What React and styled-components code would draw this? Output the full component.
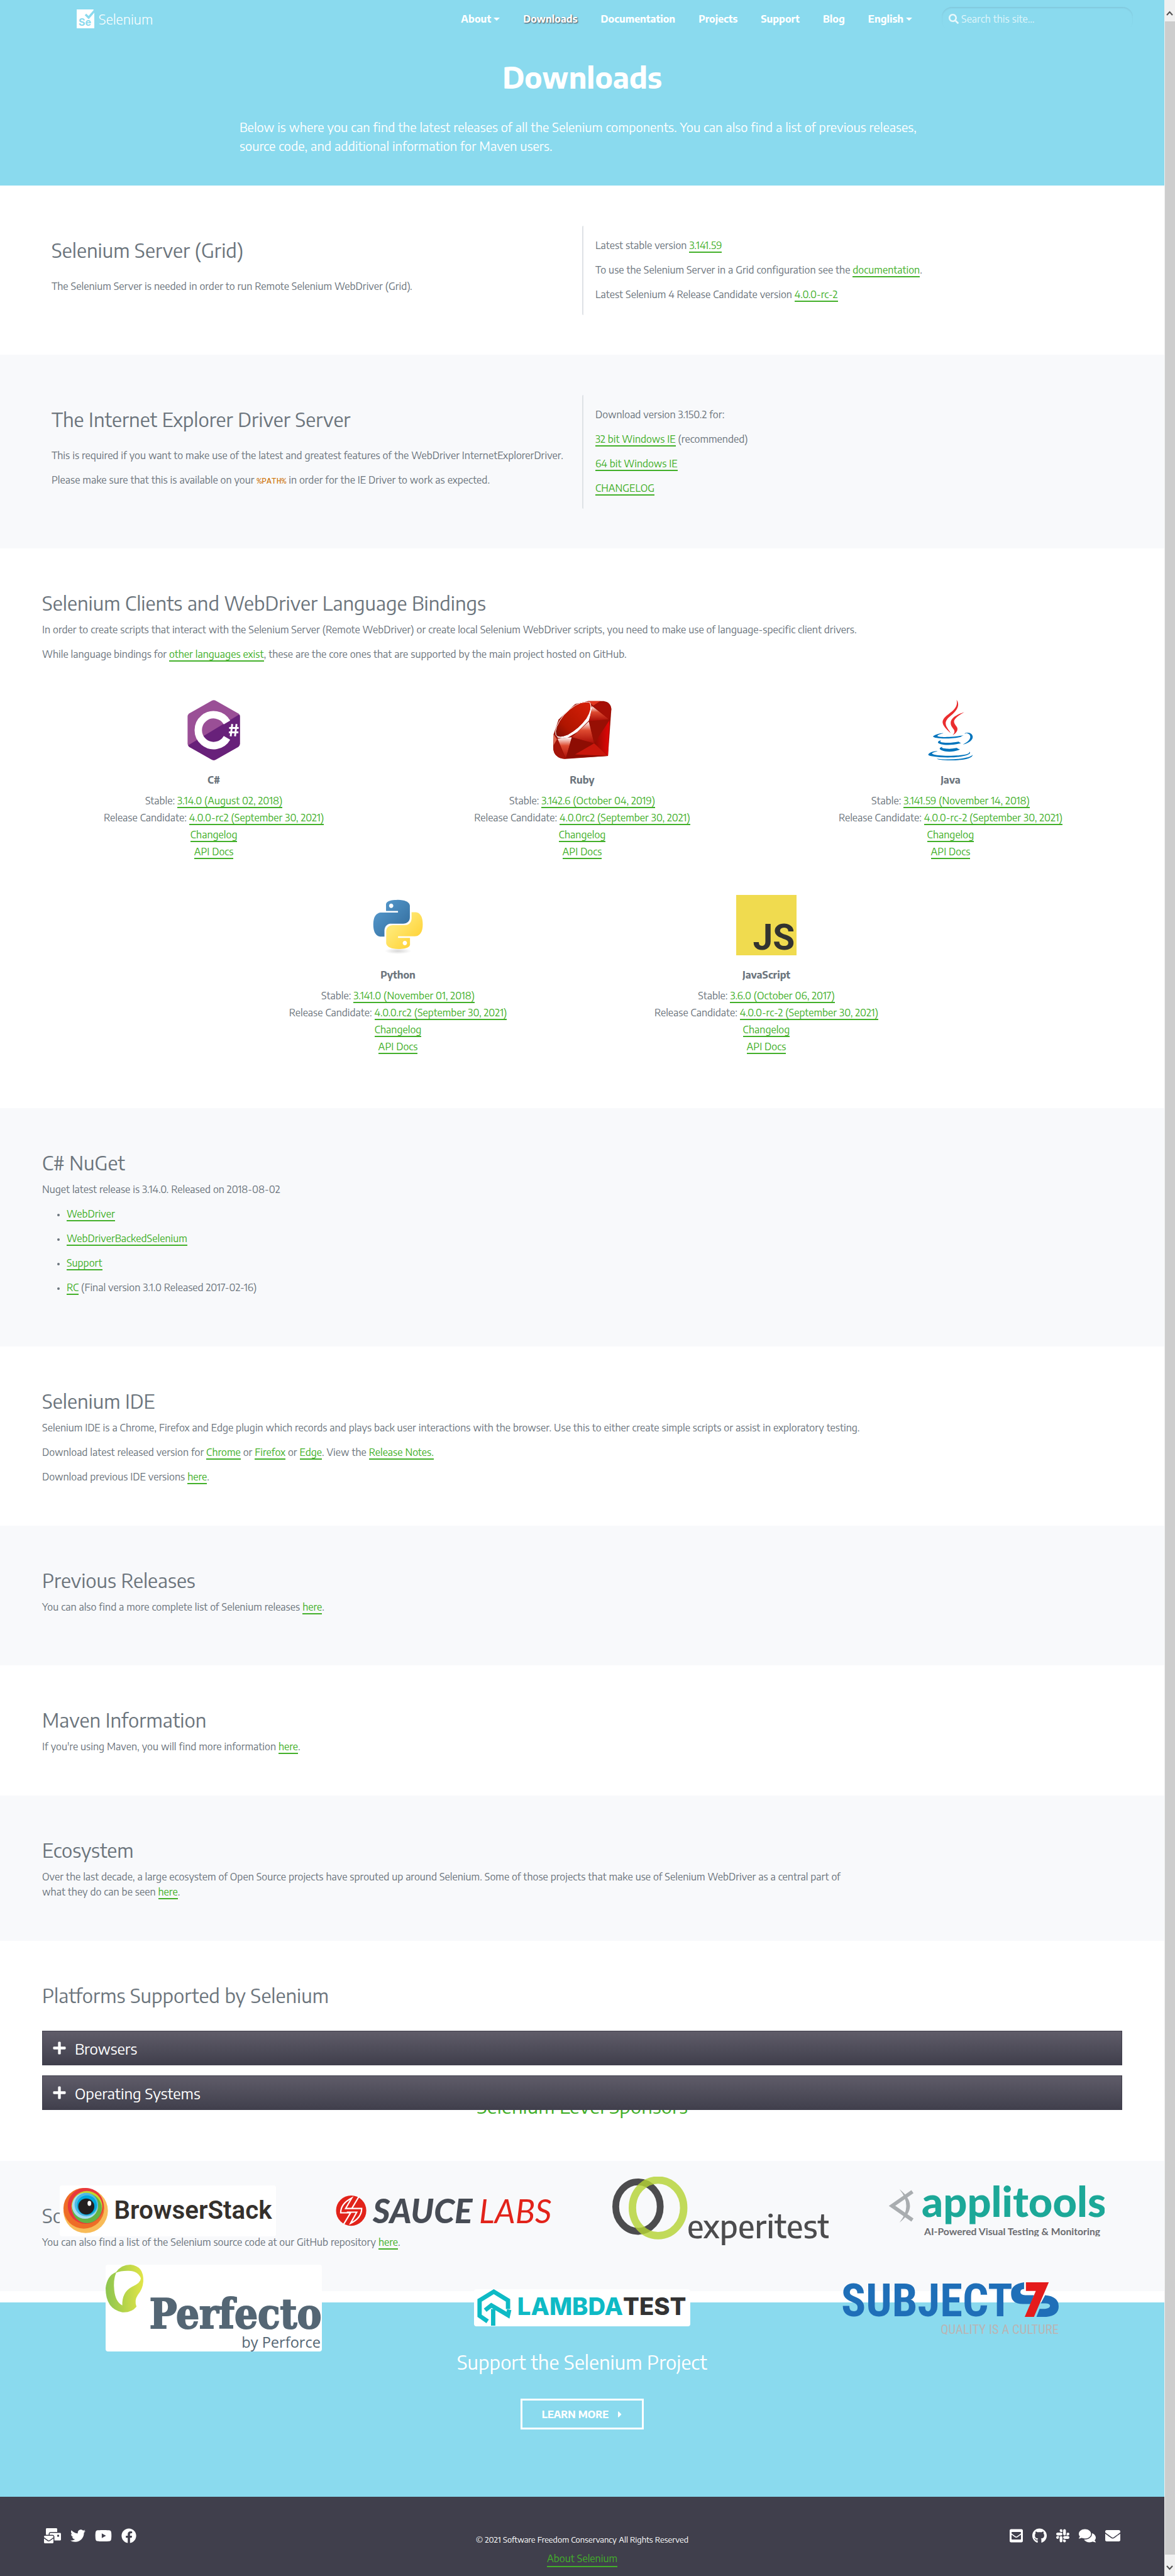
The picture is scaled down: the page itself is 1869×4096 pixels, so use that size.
import React from 'react';
import styled, { createGlobalStyle, css } from 'styled-components';
import {
  FaMailBulk, FaTwitter, FaYoutube, FaFacebook, FaEnvelopeSquare,
  FaGithub, FaSlack, FaComments, FaEnvelope, FaSearch, FaPlus, FaCaretRight,
} from 'react-icons/fa';

const color = {
  sky: '#8adaee',
  green: '#43b02a',
  text: '#6c757d',
  pale: '#f8f9fb',
  dark: '#403f4c',
};

const GlobalStyle = createGlobalStyle`
  *, *::before, *::after { box-sizing: border-box; }
  body {
    margin: 0;
    background: #fff;
    color: ${color.text};
    font-family: 'Encode Sans', Lato, 'Open Sans', sans-serif;
    font-size: 16px;
    line-height: 24px;
  }
  h1, h2, h3, p, ul { margin: 0; }
  button, input { font: inherit; }
`;

const Page = styled.div`
  display: flex;
  align-items: stretch;
`;

const Content = styled.div`
  flex: 1;
  min-width: 0;
`;

/* ---------- scroll rail ---------- */

const Rail = styled.div`
  display: flex;
  flex-direction: column;
  width: 17px;
  background: #f0f0f0;
`;

const RailArrow = styled.div`
  display: flex;
  align-items: center;
  justify-content: center;
  height: 34px;
  padding-top: 8px;
  svg { width: 11px; height: 8px; }
`;

const RailThumb = styled.div`
  flex: 1;
  background: #cdcdcd;
  margin-left: 1px;
`;

/* ---------- header ---------- */

const Hero = styled.header`
  background: ${color.sky};
  color: #fff;
  padding-bottom: 48px;
`;

const Navbar = styled.nav`
  display: flex;
  align-items: center;
  height: 60px;
  padding: 0 50px 0 122px;
`;

const Brand = styled.a`
  display: flex;
  align-items: center;
  gap: 7px;
  margin-right: auto;
  color: #fff;
  font-size: 22px;
  font-weight: 300;
  text-decoration: none;
  svg { width: 28px; height: 30px; }
`;

const NavList = styled.ul`
  display: flex;
  gap: 37px;
  margin-right: 47px;
  padding: 0;
  list-style: none;
`;

const NavLink = styled.a`
  display: flex;
  align-items: center;
  gap: 4px;
  color: #fff;
  font-weight: 700;
  text-decoration: none;
  text-shadow: ${(p) => (p.$active ? '1px 1px 2px #403f4c' : 'none')};
`;

const Caret = styled.span`
  border: 5px solid transparent;
  border-top-color: #fff;
  border-bottom: 0;
`;

const SearchBox = styled.label`
  display: flex;
  align-items: center;
  gap: 4px;
  width: 304px;
  height: 38px;
  padding: 0 11px;
  border-radius: 16px;
  color: rgba(255, 255, 255, 0.8);
  box-shadow: inset 0 2px 2px rgba(64, 63, 76, 0.1);
  svg { width: 16px; height: 16px; }
`;

const SearchInput = styled.input`
  flex: 1;
  min-width: 0;
  padding: 0;
  border: 0;
  outline: 0;
  background: transparent;
  color: #fff;
  &::placeholder { color: rgba(255, 255, 255, 0.75); opacity: 1; }
`;

const Title = styled.h1`
  margin-top: 34px;
  font-size: 47px;
  line-height: 56px;
  font-weight: 700;
  text-align: center;
`;

const Lead = styled.p`
  max-width: 1090px;
  margin: 37px auto 0;
  font-size: 20px;
  line-height: 30px;
`;

/* ---------- sections ---------- */

const Section = styled.section`
  padding: 68px 67px ${(p) => (p.$roomy ? 66 : 51)}px;
  background: ${(p) => (p.$pale ? color.pale : '#fff')};
`;

const SplitSection = styled(Section)`
  display: grid;
  grid-template-columns: 1fr 1fr;
  padding: 64px 67px 63px;
`;

const SplitMain = styled.div`
  padding: 20px 15px 0;
`;

const SplitSide = styled.div`
  padding: 19px 15px 6px 19px;
  border-left: 2px solid #dee2e6;
  border-radius: 2px;
`;

const Heading = styled.h2`
  margin-bottom: ${(p) => (p.$gap || 11)}px;
  font-size: 31px;
  line-height: 38px;
  font-weight: 400;
`;

const Text = styled.p`
  margin-bottom: 15px;
  max-width: ${(p) => (p.$narrow ? '1280px' : 'none')};
`;

const Link = styled.a`
  color: ${color.green};
  text-decoration: none;
  border-bottom: 2px solid ${color.green};
`;

const Code = styled.code`
  font-family: 'Liberation Mono', monospace;
  font-size: 13px;
  color: #cc7000;
`;

const Bullets = styled.ul`
  padding: 0 0 16px 39px;
  li { margin-bottom: 15px; }
  li::marker { font-size: 13px; }
`;

const Languages = styled.div`
  display: flex;
  flex-wrap: wrap;
  justify-content: center;
  margin: 0 -20px 24px;
`;

const Language = styled.article`
  display: flex;
  flex-direction: column;
  align-items: center;
  width: 33.33%;
  padding: 46px 0 9px;
  line-height: 27px;
  svg { height: 96px; width: 96px; }
`;

const LanguageName = styled.h3`
  margin: 19px 0 8px;
  font-size: 16px;
  line-height: 24px;
  font-weight: 700;
`;

/* ---------- accordion ---------- */

const Accordion = styled.div`
  position: relative;
  z-index: 2;
  display: flex;
  flex-direction: column;
  gap: 16px;
  margin-bottom: 30px;
`;

const AccordionButton = styled.button`
  display: flex;
  align-items: center;
  gap: 13px;
  height: 55px;
  padding: 0 15px;
  border: 1px solid ${color.dark};
  background: linear-gradient(#5f5c69, ${color.dark});
  color: #fff;
  font-size: 24px;
  text-align: left;
  svg { width: 23px; height: 23px; }
`;

/* ---------- sponsors ---------- */

const SourceArea = styled.div`
  position: relative;
  margin-bottom: 18px;
`;

const SponsorLayer = styled.div`
  position: absolute;
  z-index: 1;
  top: -106px;
  left: 47px;
  right: 47px;
`;

const SponsorHeading = styled.h2`
  margin-bottom: 93px;
  color: ${color.green};
  font-size: 31px;
  line-height: 38px;
  font-weight: 400;
  text-align: center;
`;

const SponsorRow = styled.div`
  display: flex;
  align-items: center;
  justify-content: space-around;
  margin-bottom: 31px;
`;

const SponsorLink = styled.a`
  display: block;
  width: 344px;
  svg { display: block; width: 100%; height: auto; }
  ${(p) => p.$plate && css`
    background: #fff;
    border-radius: 4px;
  `}
`;

/* ---------- call to action, footer ---------- */

const Support = styled.section`
  display: flex;
  flex-direction: column;
  align-items: center;
  padding: 76px 0 107px;
  background: ${color.sky};
  color: #fff;
`;

const SupportLink = styled.a`
  display: flex;
  align-items: center;
  gap: 14px;
  height: 49px;
  padding: 0 31px;
  border: 3px solid #fff;
  color: #fff;
  font-size: 16px;
  font-weight: 700;
  text-decoration: none;
  text-transform: uppercase;
  svg { width: 8px; height: 16px; }
`;

const Footer = styled.footer`
  display: grid;
  grid-template-columns: 1fr auto 1fr;
  padding: 50px 70px 14px;
  background: ${color.dark};
  color: #fff;
`;

const Icons = styled.div`
  display: flex;
  gap: 15px;
  justify-content: ${(p) => (p.$end ? 'flex-end' : 'flex-start')};
`;

const IconLink = styled.a`
  height: 24px;
  color: #fff;
  svg { display: block; width: ${(p) => p.$width}px; height: 24px; }
`;

const Legal = styled.div`
  display: flex;
  flex-direction: column;
  align-items: center;
  gap: 8px;
  padding-top: 8px;
`;

const Copyright = styled.small`
  font-size: 13px;
  line-height: 20px;
`;

/* ---------- drawings ---------- */

const BrandMark = () => (
  <svg viewBox="0 0 28 30" aria-hidden="true">
    <path d="M0 0H28V30H0Z" fill="#fff" />
    <path d="M28.500 -1V2L19 13L14 8" fill="none" stroke={color.sky} strokeWidth="3.500" />
    <text x="3" y="26" fontFamily="Inter, sans-serif" fontWeight="700" fontSize="16" fill={color.sky}>Se</text>
  </svg>
);

const Chevron = ({ down }) => (
  <svg viewBox="0 0 11 8" aria-hidden="true">
    <path d={down ? 'M1 1L5.500 6L10 1' : 'M1 7L5.500 2L10 7'} fill="none" stroke="#505050" strokeWidth="2" />
  </svg>
);

const CSharpLogo = () => (
  <svg viewBox="0 0 98 98" aria-hidden="true">
    <path d="M46 1Q49 -.5 52 1L89 22Q91.500 24 91.500 27V71Q91.500 74 89 76L52 97Q49 98.500 46 97L9 76Q6.500 74 6.500 71V27Q6.500 24 9 22Z" fill="#9a4f96" />
    <path d="M90.500 23.500Q91.500 25 91.500 27V71Q91.500 74 89 76L52 97Q49 98.500 46 97L9 76Q8 75 7.500 73.500Z" fill="#68217a" />
    <path d="M70.500 36.500A25 25 0 1 0 70.500 61.500" fill="none" stroke="#fff" strokeWidth="12" />
    <path d="M79 39L76.500 59M86 39L83.500 59M74 45.500H89.500M73.500 52.500H89" stroke="#fff" strokeWidth="3" fill="none" />
  </svg>
);

const RubyLogo = () => (
  <svg viewBox="28 25 292 292" aria-hidden="true">
    <defs>
      <linearGradient id="rubyTable" x1="0" y1="1" x2="1" y2="0">
        <stop offset="0" stopColor="#7a0c02" /><stop offset=".3" stopColor="#b01500" /><stop offset="1" stopColor="#d92008" />
      </linearGradient>
      <linearGradient id="rubyShine" x1="0" y1="0" x2="0" y2="1">
        <stop offset="0" stopColor="#fff" /><stop offset=".4" stopColor="#dd4a30" /><stop offset="1" stopColor="#a90c06" />
      </linearGradient>
      <linearGradient id="rubyEdge" x1="0" y1="0" x2="1" y2="0">
        <stop offset="0" stopColor="#8c0c03" /><stop offset="1" stopColor="#e40606" />
      </linearGradient>
    </defs>
    <path d="M202 30H278Q315 36 315 72L299 296L93 310Q34 306 34 252L36 190L60 120L140 45Z" fill="#9c1004" />
    <path d="M46 185L55 207Q75 212 105 207L150 180L206 125L222 70L213 38L165 110L90 180Z" fill="#fff" />
    <path d="M124 205L206 130L232 235Z" fill="url(#rubyShine)" />
    <path d="M55 212L124 205L95 308Z" fill="url(#rubyShine)" />
    <path d="M222 55L303 118L208 127Z" fill="url(#rubyShine)" />
    <path d="M232 235L306 122L299 294Z" fill="url(#rubyEdge)" />
    <path d="M208 127L306 122L232 235Z" fill="#970f04" />
    <path d="M95 308L124 205L232 235L299 296Z" fill="#8e0d03" />
    <path d="M232 235L299 296L140 288Z" fill="#c9170c" />
    <path d="M202 30H262L228 52Z" fill="#e0351f" />
    <path d="M228 52L262 32Q315 36 315 72L303 118Z" fill="#a50f06" />
    <path d="M36 190L52 215L36 245Z" fill="#e0654e" />
    <path d="M36 245L53 215L93 310Q34 306 34 252Z" fill="#a41409" />
    <path d="M212 38Q226 66 196 115Q160 165 105 195Q60 214 47 195Q36 160 85 98Q145 35 190 35Q206 34 212 38Z" fill="url(#rubyTable)" stroke="#fff" strokeWidth="3" />
  </svg>
);

const JavaLogo = () => (
  <svg viewBox="0 0 384 512" aria-hidden="true">
    <g fill="#0074bd">
      <path d="M277.740 312.900c9.800-6.700 23.400-12.500 23.400-12.500s-38.700 7-77.200 10.200c-47.100 3.900-97.700 4.700-123.100 1.300-60.100-8 33-30.100 33-30.100s-36.100-2.400-80.600 19c-52.500 25.400 130 37 224.500 12.100z" />
      <path d="M300.840 375.100a12.190 12.190 0 0 1-2 2.600c128.300-33.700 81.100-118.900 19.800-97.300a17.330 17.330 0 0 0-8.200 6.300 70.450 70.450 0 0 1 11-3c31-6.500 75.500 41.500-20.600 91.400zM348 437.400s14.500 11.900-15.900 21.200c-57.900 17.500-240.800 22.800-291.600.7-18.300-7.900 16-19 26.800-21.300 11.200-2.400 17.700-2 17.700-2-20.300-14.300-131.300 28.100-56.400 40.200C232.840 509.400 401 461.300 348 437.400zM124.440 396c-78.700 22 47.900 67.400 148.100 24.500a185.890 185.890 0 0 1-28.200-13.800c-44.700 8.500-65.400 9.100-106 4.500-33.500-3.800-13.900-15.200-13.900-15.200zm179.800 97.200c-78.700 14.800-175.800 13.100-233.300 3.600 0-.1 11.800 9.700 72.400 13.600 92.200 5.900 233.800-3.300 237.100-46.900 0 0-6.400 16.500-76.200 29.700zM260.640 353c-59.200 11.400-93.500 11.100-136.800 6.600-33.500-3.500-11.600-19.700-11.600-19.700-86.800 28.800 48.200 61.400 169.500 25.900a60.370 60.370 0 0 1-21.100-12.800z" />
    </g>
    <g fill="#ea2d2e">
      <path d="M192.340 280.800c-19-42.700-83.100-80.200 0-145.800C296 53.200 242.840 0 242.840 0c21.500 84.500-75.600 110.100-110.700 162.600-23.900 35.900 11.700 74.400 60.200 118.200z" />
      <path d="M306.940 104.600c.1 0-175.200 43.800-91.500 140.200 24.700 28.400-6.500 54-6.500 54s62.700-32.400 33.900-72.900c-26.900-37.800-47.500-56.600 64.100-121.300z" />
    </g>
  </svg>
);

const PythonLogo = () => (
  <svg viewBox="-2.750 -2.400 29.500 29.500" aria-hidden="true">
    <defs>
      <linearGradient id="pyBlue" x1="0" y1="0" x2="1" y2="1">
        <stop offset="0" stopColor="#5a9fd4" /><stop offset="1" stopColor="#306998" />
      </linearGradient>
      <linearGradient id="pyYellow" x1="0" y1="0" x2="1" y2="1">
        <stop offset=".3" stopColor="#ffe873" /><stop offset=".8" stopColor="#ffd43b" />
      </linearGradient>
      <radialGradient id="pyShade">
        <stop offset="0" stopColor="#bbb" stopOpacity=".6" /><stop offset="1" stopColor="#bbb" stopOpacity="0" />
      </radialGradient>
    </defs>
    <ellipse cx="12" cy="25" rx="6.500" ry="1.500" fill="url(#pyShade)" />
    <path fill="url(#pyBlue)" d="M14.250.18l.9.2.73.26.59.3.45.32.34.34.25.34.16.33.1.3.04.26.02.2-.01.13V8.500l-.05.63-.13.55-.21.46-.26.38-.3.31-.33.25-.35.19-.35.14-.33.1-.3.07-.26.04-.21.02H8.770l-.69.05-.59.14-.5.22-.41.27-.33.32-.27.35-.2.36-.15.37-.1.35-.07.32-.04.27-.02.21v3.060H3.170l-.21-.03-.28-.07-.32-.12-.35-.18-.36-.26-.36-.36-.35-.46-.32-.59-.28-.73-.21-.88-.14-1.050-.05-1.230.06-1.220.16-1.040.24-.87.32-.71.36-.57.4-.44.42-.33.42-.24.4-.16.36-.1.32-.05.24-.01h.16l.06.01h8.160v-.83H6.180l-.01-2.750-.02-.37.05-.34.11-.31.17-.28.25-.26.31-.23.38-.2.44-.18.51-.15.58-.12.64-.1.71-.06.77-.04.84-.02 1.270.05zm-6.300 1.980l-.23.33-.08.41.08.41.23.34.33.22.41.09.41-.09.33-.22.23-.34.08-.41-.08-.41-.23-.33-.33-.22-.41-.09-.41.09z" />
    <path fill="url(#pyYellow)" d="M21.100 6.110l.28.06.32.12.35.18.36.27.36.35.35.47.32.59.28.73.21.88.14 1.040.05 1.230-.06 1.230-.16 1.040-.24.86-.32.71-.36.57-.4.45-.42.33-.42.24-.4.16-.36.09-.32.05-.24.02-.16-.01h-8.220v.82h5.840l.01 2.760.02.36-.05.34-.11.31-.17.29-.25.25-.31.24-.38.2-.44.17-.51.15-.58.13-.64.09-.71.07-.77.04-.84.01-1.270-.04-1.070-.14-.9-.2-.73-.25-.59-.3-.45-.33-.34-.34-.25-.34-.16-.33-.1-.3-.04-.25-.02-.2.01-.13v-5.340l.05-.64.13-.54.21-.46.26-.38.3-.32.33-.24.35-.2.35-.14.33-.1.3-.06.26-.04.21-.02.13-.01h5.840l.69-.05.59-.14.5-.21.41-.28.33-.32.27-.35.2-.36.15-.36.1-.35.07-.32.04-.28.02-.21V6.070h2.090l.14.01zm-6.470 14.250l-.23.33-.08.41.08.41.23.33.33.23.41.08.41-.08.33-.23.23-.33.08-.41-.08-.41-.23-.33-.33-.23-.41-.08-.41.08z" />
  </svg>
);

const JavaScriptLogo = () => (
  <svg viewBox="0 0 98 98" aria-hidden="true">
    <rect width="98" height="98" fill="#f0db4f" />
    <text x="27" y="89" fontFamily="Roboto, sans-serif" fontWeight="700" fontSize="58" fill="#323330">JS</text>
  </svg>
);

const BrowserStackLogo = () => (
  <svg viewBox="0 0 350 82" role="img" aria-label="BrowserStack">
    <circle cx="42" cy="41" r="36" fill="#f8bb57" />
    <circle cx="39" cy="37" r="33" fill="#ee6d27" />
    <circle cx="42" cy="33" r="29" fill="#e8373d" />
    <circle cx="44" cy="34" r="25" fill="#c2d52d" />
    <circle cx="44" cy="37" r="24" fill="#64b345" />
    <circle cx="41" cy="33" r="21" fill="#a8def2" />
    <circle cx="43" cy="31" r="19" fill="#4fb9e5" />
    <circle cx="44" cy="32" r="16" fill="#00a9dc" />
    <circle cx="43" cy="34" r="13" fill="#221f20" />
    <ellipse cx="48" cy="29" rx="3" ry="4" fill="#fff" />
    <text x="88" y="54" fontFamily="Roboto, sans-serif" fontWeight="600" fontSize="41" fill="#35302c">BrowserStack</text>
  </svg>
);

const SauceLabsLogo = () => (
  <svg viewBox="0 0 350 49" role="img" aria-label="Sauce Labs">
    <circle cx="25" cy="24.500" r="24.500" fill="#e2231a" />
    <path d="M38 1L26 21H42Q42 36 24 45L34 27H18M12 48L24 28H8Q8 13 26 4L16 21H32" fill="none" stroke="#fff" strokeWidth="2.200" />
    <text x="60" y="45" fontFamily="Lato, sans-serif" fontWeight="900" fontStyle="italic" fontSize="54" fill="#474c55">SAUCE</text>
    <text x="232" y="45" fontFamily="Lato, sans-serif" fontWeight="400" fontStyle="italic" fontSize="53" fill="#e2231a">LABS</text>
  </svg>
);

const ExperitestLogo = () => (
  <svg viewBox="0 0 350 111" role="img" aria-label="Experitest">
    <ellipse cx="41.500" cy="48.500" rx="36" ry="40" fill="none" stroke="#4c4c4e" strokeWidth="11" />
    <ellipse cx="74" cy="50.500" rx="41.500" ry="45" fill="none" stroke="#b5d334" strokeOpacity=".82" strokeWidth="12" />
    <text x="121" y="100" fontFamily="'Encode Sans', sans-serif" fontWeight="500" fontSize="51" fill="#4c4c4e">experitest</text>
  </svg>
);

const ApplitoolsLogo = () => (
  <svg viewBox="0 0 350 83" role="img" aria-label="Applitools">
    <path d="M39 10L6 33L39 56" fill="none" stroke="#a9adb0" strokeWidth="6" />
    <path d="M18 6Q52 33 18 60Q40 33 18 6Z" fill="#a9adb0" />
    <text x="54" y="51" fontFamily="Lato, sans-serif" fontWeight="900" fontSize="68" fill="#1ca898">applitools</text>
    <text x="58" y="80" fontFamily="Lato, sans-serif" fontWeight="700" fontSize="16" fill="#6b6c70">AI-Powered Visual Testing &amp; Monitoring</text>
  </svg>
);

const PerfectoLogo = () => (
  <svg viewBox="0 0 350 140" role="img" aria-label="Perfecto by Perforce">
    <defs>
      <linearGradient id="perfecto" x1="0" y1="0" x2="1" y2="0">
        <stop offset="0" stopColor="#8cc550" /><stop offset=".5" stopColor="#b5d44a" /><stop offset="1" stopColor="#e2e548" />
      </linearGradient>
    </defs>
    <path d="M17 12Q25 0 40 0Q62 2 61 27Q60 40 52 49Q46 58 50 68Q42 78 27 77Q0 72 0 38Q2 18 17 12ZM17 13Q12 25 14 42Q16 60 27 66Q26 45 42 36Q57 30 57 22Q52 9 35 10Q24 10 17 13Z" fill="url(#perfecto)" fillRule="evenodd" />
    <text x="71" y="103" fontFamily="'DejaVu Serif Condensed', 'DejaVu Serif', serif" fontWeight="700" fontSize="66" fill="#546674" stroke="#546674" strokeWidth="2">Perfecto</text>
    <text x="348" y="134" textAnchor="end" fontFamily="'Open Sans', sans-serif" fontSize="24" fill="#546674">by Perforce</text>
  </svg>
);

const LambdaTestLogo = () => (
  <svg viewBox="0 0 350 60" role="img" aria-label="LambdaTest">
    <path d="M22 52L9 43V18L32 4L55 18V32" fill="none" stroke="#0ebac5" strokeWidth="7" />
    <path d="M31 59V32M18 34L28 26L55 42L57 33" fill="none" stroke="#0ebac5" strokeWidth="7" />
    <text x="70" y="42" fontFamily="Inter, sans-serif" fontWeight="800" fontSize="39" fill="#0ebac5">
      LAMBDA<tspan fill="#333">TEST</tspan>
    </text>
  </svg>
);

const Subject7Logo = () => (
  <svg viewBox="0 0 350 85" role="img" aria-label="Subject7">
    <text x="-2" y="56" fontFamily="'Roboto Condensed', Roboto, sans-serif" fontWeight="700" fontSize="74" fill="#1f6fb8">SUBJECT</text>
    <path d="M294 1Q272 4 273 20Q273 36 292 36H305L310 22H296Q288 21 288 17Q288 12 294 12Z" fill="#1f6fb8" />
    <path d="M328 22Q350 24 350 40Q350 55 330 57H314L319 44H328Q336 43 336 39Q336 35 328 35H321Z" fill="#1f6fb8" />
    <path d="M297 1H334L310 57H295L313 15H297Z" fill="#e51b1b" />
    <text x="350" y="84" textAnchor="end" fontFamily="'Roboto Condensed', Roboto, sans-serif" fontSize="21" fill="#b9b5b5">QUALITY IS A CULTURE</text>
  </svg>
);

/* ---------- data ---------- */

const navItems = [
  { label: 'About', menu: true },
  { label: 'Downloads', active: true },
  { label: 'Documentation' },
  { label: 'Projects' },
  { label: 'Support' },
  { label: 'Blog' },
  { label: 'English', menu: true },
];

const languages = [
  { name: 'C#', Logo: CSharpLogo, stable: '3.14.0 (August 02, 2018)', rc: '4.0.0-rc2 (September 30, 2021)' },
  { name: 'Ruby', Logo: RubyLogo, stable: '3.142.6 (October 04, 2019)', rc: '4.0.0rc2 (September 30, 2021)' },
  { name: 'Java', Logo: JavaLogo, stable: '3.141.59 (November 14, 2018)', rc: '4.0.0-rc-2 (September 30, 2021)' },
  { name: 'Python', Logo: PythonLogo, stable: '3.141.0 (November 01, 2018)', rc: '4.0.0.rc2 (September 30, 2021)' },
  { name: 'JavaScript', Logo: JavaScriptLogo, stable: '3.6.0 (October 06, 2017)', rc: '4.0.0-rc-2 (September 30, 2021)' },
];

const sponsorRows = [
  [
    { name: 'BrowserStack', Logo: BrowserStackLogo, plate: true },
    { name: 'SauceLabs', Logo: SauceLabsLogo },
    { name: 'Experitest', Logo: ExperitestLogo },
    { name: 'Applitools', Logo: ApplitoolsLogo },
  ],
  [
    { name: 'Perfecto', Logo: PerfectoLogo, plate: true },
    { name: 'LambdaTest', Logo: LambdaTestLogo, plate: true },
    { name: 'Subject7', Logo: Subject7Logo },
  ],
];

const community = [
  { label: 'Mailing list', Icon: FaMailBulk, width: 27 },
  { label: 'Twitter', Icon: FaTwitter, width: 24 },
  { label: 'YouTube', Icon: FaYoutube, width: 27 },
  { label: 'Facebook', Icon: FaFacebook, width: 24 },
];

const developers = [
  { label: 'Developer mail', Icon: FaEnvelopeSquare, width: 21 },
  { label: 'GitHub', Icon: FaGithub, width: 23 },
  { label: 'Slack', Icon: FaSlack, width: 21 },
  { label: 'Chat', Icon: FaComments, width: 27 },
  { label: 'Email', Icon: FaEnvelope, width: 24 },
];

const IconLinks = ({ items, end }) => (
  <Icons $end={end}>
    {items.map(({ label, Icon, width }) => (
      <IconLink key={label} href="#" aria-label={label} $width={width}><Icon /></IconLink>
    ))}
  </Icons>
);

export default function App() {
  return (
    <Page>
      <GlobalStyle />
      <Content>
        <Hero>
          <Navbar>
            <Brand href="#"><BrandMark />Selenium</Brand>
            <NavList>
              {navItems.map((item) => (
                <li key={item.label}>
                  <NavLink href="#" $active={item.active}>
                    {item.label}
                    {item.menu && <Caret />}
                  </NavLink>
                </li>
              ))}
            </NavList>
            <SearchBox>
              <FaSearch />
              <SearchInput type="search" placeholder="Search this site…" aria-label="Search this site" />
            </SearchBox>
          </Navbar>
          <Title>Downloads</Title>
          <Lead>
            Below is where you can find the latest releases of all the Selenium components. You can also find a list of
            previous releases, source code, and additional information for Maven users.
          </Lead>
        </Hero>

        <main>
          <SplitSection>
            <SplitMain>
              <Heading $gap={26}>Selenium Server (Grid)</Heading>
              <Text>The Selenium Server is needed in order to run Remote Selenium WebDriver (Grid).</Text>
            </SplitMain>
            <SplitSide>
              <Text>Latest stable version <Link href="#">3.141.59</Link></Text>
              <Text>To use the Selenium Server in a Grid configuration see the <Link href="#">documentation</Link>.</Text>
              <Text>Latest Selenium 4 Release Candidate version <Link href="#">4.0.0-rc-2</Link></Text>
            </SplitSide>
          </SplitSection>

          <SplitSection $pale>
            <SplitMain>
              <Heading $gap={26}>The Internet Explorer Driver Server</Heading>
              <Text>This is required if you want to make use of the latest and greatest features of the WebDriver InternetExplorerDriver.</Text>
              <Text>Please make sure that this is available on your <Code>%PATH%</Code> in order for the IE Driver to work as expected.</Text>
            </SplitMain>
            <SplitSide>
              <Text>Download version 3.150.2 for:</Text>
              <Text><Link href="#">32 bit Windows IE</Link> (recommended)</Text>
              <Text><Link href="#">64 bit Windows IE</Link></Text>
              <Text><Link href="#">CHANGELOG</Link></Text>
            </SplitSide>
          </SplitSection>

          <Section>
            <Heading>Selenium Clients and WebDriver Language Bindings</Heading>
            <Text>
              In order to create scripts that interact with the Selenium Server (Remote WebDriver) or create local
              Selenium WebDriver scripts, you need to make use of language-specific client drivers.
            </Text>
            <Text>
              While language bindings for <Link href="#">other languages exist</Link>, these are the core ones that are
              supported by the main project hosted on GitHub.
            </Text>
            <Languages>
              {languages.map(({ name, Logo, stable, rc }) => (
                <Language key={name}>
                  <Logo />
                  <LanguageName>{name}</LanguageName>
                  <div>Stable: <Link href="#">{stable}</Link></div>
                  <div>Release Candidate: <Link href="#">{rc}</Link></div>
                  <div><Link href="#">Changelog</Link></div>
                  <div><Link href="#">API Docs</Link></div>
                </Language>
              ))}
            </Languages>
          </Section>

          <Section $pale>
            <Heading>C# NuGet</Heading>
            <Text>Nuget latest release is 3.14.0. Released on 2018-08-02</Text>
            <Bullets>
              <li><Link href="#">WebDriver</Link></li>
              <li><Link href="#">WebDriverBackedSelenium</Link></li>
              <li><Link href="#">Support</Link></li>
              <li><Link href="#">RC</Link> (Final version 3.1.0 Released 2017-02-16)</li>
            </Bullets>
          </Section>

          <Section>
            <Heading>Selenium IDE</Heading>
            <Text>
              Selenium IDE is a Chrome, Firefox and Edge plugin which records and plays back user interactions with the
              browser. Use this to either create simple scripts or assist in exploratory testing.
            </Text>
            <Text>
              Download latest released version for <Link href="#">Chrome</Link> or <Link href="#">Firefox</Link> or{' '}
              <Link href="#">Edge</Link>. View the <Link href="#">Release Notes.</Link>
            </Text>
            <Text>Download previous IDE versions <Link href="#">here</Link>.</Text>
          </Section>

          <Section $pale $roomy>
            <Heading>Previous Releases</Heading>
            <Text>You can also find a more complete list of Selenium releases <Link href="#">here</Link>.</Text>
          </Section>

          <Section>
            <Heading>Maven Information</Heading>
            <Text>If you're using Maven, you will find more information <Link href="#">here</Link>.</Text>
          </Section>

          <Section $pale>
            <Heading>Ecosystem</Heading>
            <Text $narrow>
              Over the last decade, a large ecosystem of Open Source projects have sprouted up around Selenium. Some of
              those projects that make use of Selenium WebDriver as a central part of what they do can be
              seen <Link href="#">here</Link>.
            </Text>
          </Section>

          <Section>
            <Heading $gap={37}>Platforms Supported by Selenium</Heading>
            <Accordion>
              <AccordionButton type="button" aria-expanded="false"><FaPlus />Browsers</AccordionButton>
              <AccordionButton type="button" aria-expanded="false"><FaPlus />Operating Systems</AccordionButton>
            </Accordion>
          </Section>

          <SourceArea>
            <Section $pale>
              <Heading>Source Code</Heading>
              <Text>You can also find a list of the Selenium source code at our GitHub repository <Link href="#">here</Link>.</Text>
            </Section>
            <SponsorLayer>
              <SponsorHeading>Selenium Level Sponsors</SponsorHeading>
              {sponsorRows.map((row) => (
                <SponsorRow key={row[0].name}>
                  {row.map(({ name, Logo, plate }) => (
                    <SponsorLink key={name} href="#" $plate={plate}><Logo /></SponsorLink>
                  ))}
                </SponsorRow>
              ))}
            </SponsorLayer>
          </SourceArea>

          <Support>
            <Heading $gap={39}>Support the Selenium Project</Heading>
            <SupportLink href="#">Learn more <FaCaretRight /></SupportLink>
          </Support>
        </main>

        <Footer>
          <IconLinks items={community} />
          <Legal>
            <Copyright>© 2021 Software Freedom Conservancy All Rights Reserved</Copyright>
            <Link href="#">About Selenium</Link>
          </Legal>
          <IconLinks items={developers} end />
        </Footer>
      </Content>
      <Rail aria-hidden="true">
        <RailArrow><Chevron /></RailArrow>
        <RailThumb />
        <RailArrow><Chevron down /></RailArrow>
      </Rail>
    </Page>
  );
}
